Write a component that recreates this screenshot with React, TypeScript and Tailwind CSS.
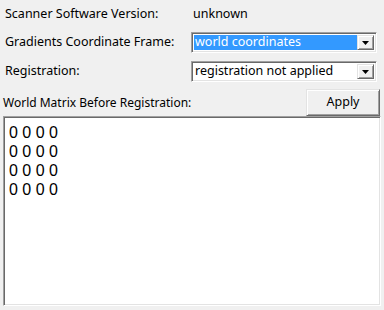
import React from "react";

const sunken =
  "border border-t-[#a0a0a0] border-l-[#a0a0a0] border-r-white border-b-white shadow-[inset_1px_1px_0_#696969,inset_-1px_-1px_0_#e3e3e3]";
const raised =
  "border border-t-[#e3e3e3] border-l-[#e3e3e3] border-r-[#696969] border-b-[#696969] shadow-[inset_1px_1px_0_#ffffff,inset_-1px_-1px_0_#a0a0a0]";

const ComboBox: React.FC<{ value: string; selected?: boolean }> = ({ value, selected }) => (
  <div className={`flex h-[21px] w-[186px] items-stretch bg-white p-[2px] ${sunken}`}>
    <div
      className={`flex flex-1 items-center whitespace-nowrap px-[1px] text-[12.5px] leading-none ${
        selected ? "bg-[#3399ff] text-white" : "text-black"
      }`}
    >
      {value}
    </div>
    <div className={`flex w-[17px] items-center justify-center bg-[#f0f0f0] ${raised}`}>
      <svg width="7" height="4" viewBox="0 0 7 4">
        <path d="M0 0h7L3.5 4z" fill="#000" />
      </svg>
    </div>
  </div>
);

export default function App() {
  const rows = ["0 0 0 0", "0 0 0 0", "0 0 0 0", "0 0 0 0"];

  return (
    <div
      className="flex h-[310px] w-[384px] flex-col whitespace-nowrap bg-[#f0f0f0] text-[12.5px] text-black"
      style={{ fontFamily: "'Noto Sans', 'Liberation Sans', sans-serif" }}
    >
      <div className="flex h-[28px] shrink-0 items-center">
        <span className="w-[188px] pl-[5px]">Scanner Software Version:</span>
        <span className="pl-[5px]">unknown</span>
      </div>
      <div className="flex h-[29px] shrink-0 items-start pt-[4px]">
        <span className="flex h-[21px] w-[191px] items-center pl-[5px]">
          Gradients Coordinate Frame:
        </span>
        <ComboBox value="world coordinates" selected />
      </div>
      <div className="flex h-[29px] shrink-0 items-start pt-[4px]">
        <span className="flex h-[21px] w-[191px] items-center pl-[5px]">Registration:</span>
        <ComboBox value="registration not applied" />
      </div>
      <div className="flex h-[30px] shrink-0 items-end justify-between pr-[4px]">
        <span className="flex h-[27px] items-center pl-[3px] text-[12px]">
          World Matrix Before Registration:
        </span>
        <button className={`h-[27px] w-[74px] bg-[#f0f0f0] text-[12.5px] ${raised}`}>Apply</button>
      </div>
      <div
        className={`mx-[3px] mb-[4px] flex-1 bg-white px-[5px] pt-[6px] text-[16px] leading-[19px] ${sunken}`}
        style={{ fontFamily: "'Liberation Sans', Arial, sans-serif" }}
      >
        {rows.map((r, i) => (
          <div key={i}>{r}</div>
        ))}
      </div>
    </div>
  );
}
